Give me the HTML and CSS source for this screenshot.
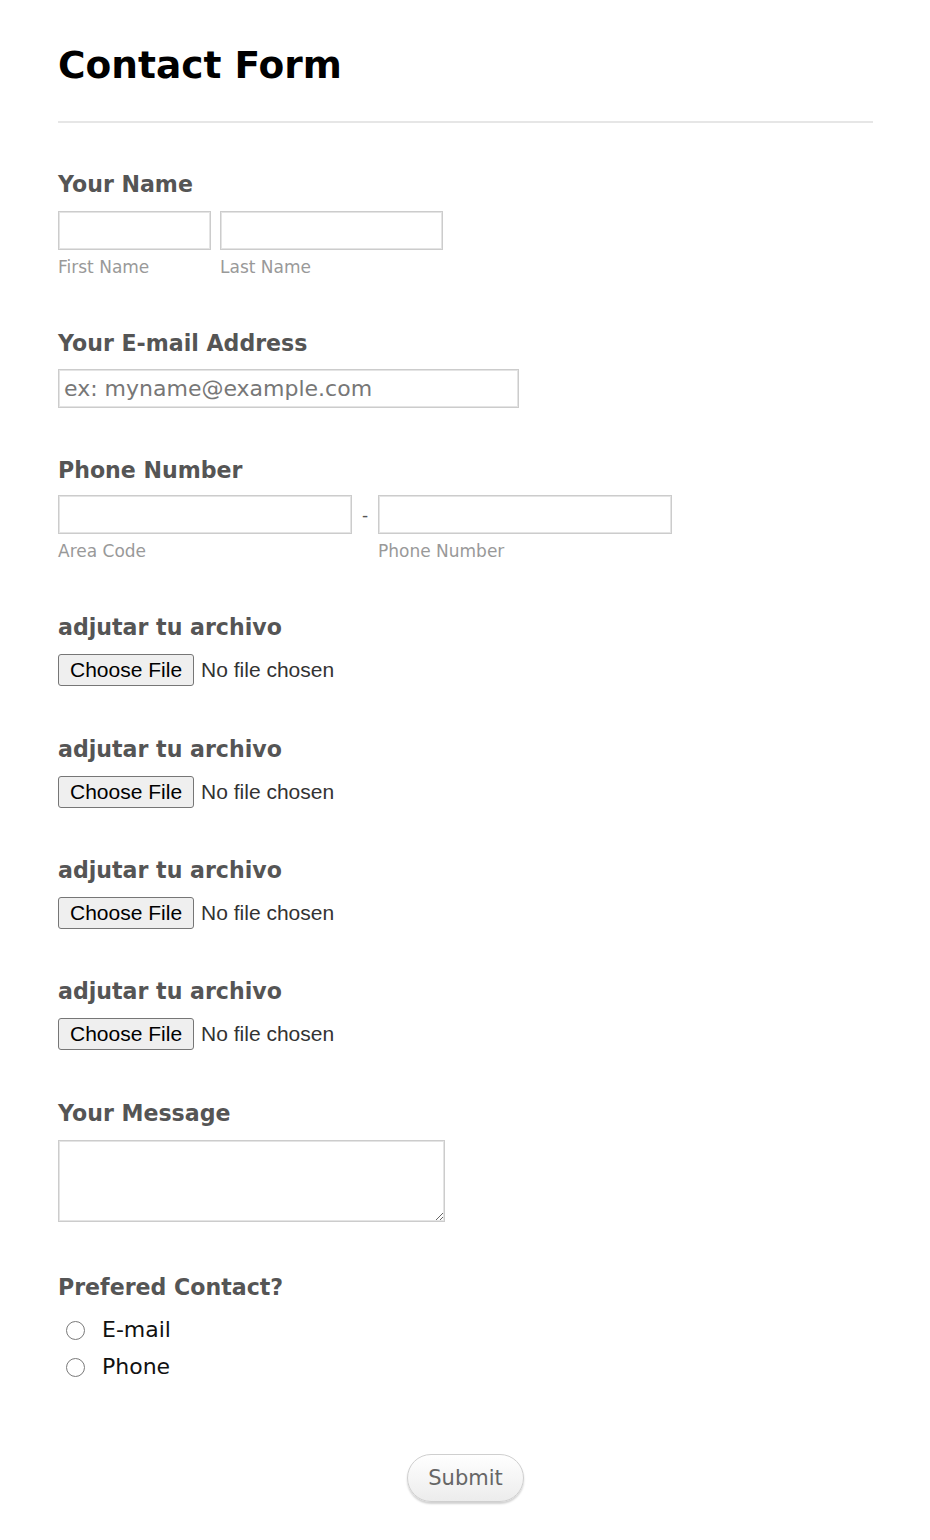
FILE: index.html
```html
<!DOCTYPE html>
<html lang="en">
<head>
<meta charset="utf-8">
<title>Contact Form</title>
<link rel="stylesheet" href="styles.css">
</head>
<body>
<main class="page">
  <h1 class="title">Contact Form</h1>
  <hr class="rule">
  <form class="form">
    <div class="field field-first">
      <label class="label">Your Name</label>
      <div class="row">
        <div class="sub">
          <input class="text w-first" type="text">
          <span class="sublabel">First Name</span>
        </div>
        <div class="sub">
          <input class="text w-last" type="text">
          <span class="sublabel">Last Name</span>
        </div>
      </div>
    </div>

    <div class="field field-email">
      <label class="label">Your E-mail Address</label>
      <input class="text w-email email-input" type="email" placeholder="ex: myname@example.com">
    </div>

    <div class="field">
      <label class="label">Phone Number</label>
      <div class="row phone-row">
        <div class="sub">
          <input class="text w-phone" type="tel">
          <span class="sublabel">Area Code</span>
        </div>
        <span class="dash">-</span>
        <div class="sub">
          <input class="text w-phone" type="tel">
          <span class="sublabel">Phone Number</span>
        </div>
      </div>
    </div>

    <div class="field field-after-phone">
      <label class="label">adjutar tu archivo</label>
      <input class="file" type="file">
    </div>
    <div class="field field-plus">
      <label class="label">adjutar tu archivo</label>
      <input class="file" type="file">
    </div>
    <div class="field">
      <label class="label">adjutar tu archivo</label>
      <input class="file" type="file">
    </div>
    <div class="field">
      <label class="label">adjutar tu archivo</label>
      <input class="file" type="file">
    </div>

    <div class="field field-plus">
      <label class="label">Your Message</label>
      <textarea class="message"></textarea>
    </div>

    <div class="field field-radio">
      <label class="label">Prefered Contact?</label>
      <div class="radios">
        <label class="radio-row"><input class="radio" type="radio" name="contact"><span>E-mail</span></label>
        <label class="radio-row"><input class="radio" type="radio" name="contact"><span>Phone</span></label>
      </div>
    </div>

    <div class="actions">
      <button class="submit" type="button">Submit</button>
    </div>
  </form>
</main>
</body>
</html>
```

FILE: styles.css
```css
html, body {
  margin: 0;
  padding: 0;
  background: #ffffff;
}

body {
  font-family: "DejaVu Sans", Verdana, sans-serif;
  color: #555555;
}

.page {
  width: 815px;
  padding: 43px 0 40px 58px;
}

.title {
  margin: 0;
  font-size: 37.5px;
  line-height: 44px;
  font-weight: bold;
  color: #000000;
}

.rule {
  margin: 34px 0 0 0;
  height: 2px;
  border: 0;
  background: #e6e6e6;
}

.form {
  display: flex;
  flex-direction: column;
}

.field {
  display: flex;
  flex-direction: column;
  align-items: flex-start;
  margin-top: 49px;
}

.field-first {
  margin-top: 48px;
}

.field-email {
  margin-top: 51px;
}

.field-after-phone {
  margin-top: 51px;
}

.field-plus {
  margin-top: 50px;
}

.field-radio {
  margin-top: 52px;
}

.label {
  display: block;
  font-size: 22.1px;
  line-height: 26px;
  font-weight: bold;
  color: #555555;
  margin-bottom: 14px;
}

.row {
  display: flex;
  gap: 9px;
}

.phone-row {
  gap: 0;
  margin-top: -2px;
}

.sub {
  display: flex;
  flex-direction: column;
}

.text {
  box-sizing: border-box;
  height: 39px;
  margin: 0;
  padding: 0 5px;
  border: 1px solid #cccccc;
  box-shadow: inset 0 0 0 1px #e4e4e4;
  border-radius: 0;
  background: #ffffff;
  font-family: "DejaVu Sans", Verdana, sans-serif;
  font-size: 22px;
  color: #555555;
  outline: none;
}

.email-input {
  margin-top: -1px;
}

.text::placeholder {
  color: #777777;
}

.w-first { width: 153px; }
.w-last { width: 223px; }
.w-email { width: 461px; }
.w-phone { width: 294px; }

.sublabel {
  margin-top: 6px;
  font-size: 17px;
  line-height: 23px;
  color: #999999;
}

.dash {
  width: 26px;
  text-align: center;
  font-size: 17px;
  line-height: 41px;
  color: #555555;
}

.file {
  display: block;
  margin: 0;
  font-family: "Liberation Sans", Arial, sans-serif;
  font-size: 21px;
  line-height: 32px;
  height: 32px;
  color: #333333;
}

.file::file-selector-button {
  box-sizing: border-box;
  height: 32px;
  margin: 0 7px 0 0;
  padding: 0 11px;
  border: 1px solid #767676;
  border-radius: 3px;
  background: #efefef;
  font-family: "Liberation Sans", Arial, sans-serif;
  font-size: 21px;
  color: #000000;
}

.message {
  display: block;
  box-sizing: border-box;
  width: 387px;
  height: 82px;
  margin: 0;
  padding: 5px;
  border: 1px solid #cccccc;
  box-shadow: inset 0 0 0 1px #e4e4e4;
  border-radius: 0;
  font-family: "DejaVu Sans", Verdana, sans-serif;
  font-size: 18px;
  outline: none;
}

.radios {
  display: flex;
  flex-direction: column;
  margin-top: -3px;
}

.radio-row {
  display: flex;
  align-items: center;
  height: 37px;
  font-size: 22px;
  color: #111111;
}

.radio {
  appearance: none;
  -webkit-appearance: none;
  box-sizing: border-box;
  width: 19px;
  height: 19px;
  margin: 1px 17px 0 8px;
  border: 1.5px solid #7a7a7a;
  border-radius: 50%;
  background: #ffffff;
}

.actions {
  display: flex;
  justify-content: center;
  margin-top: 69px;
}

.submit {
  box-sizing: border-box;
  width: 117px;
  height: 48px;
  padding: 0;
  border: 1px solid #cfcfcf;
  border-radius: 24px;
  background: linear-gradient(#ffffff, #ececec);
  box-shadow: 0 2px 2px rgba(0, 0, 0, 0.18);
  font-family: "DejaVu Sans", Verdana, sans-serif;
  font-size: 21px;
  color: #666666;
}
```
